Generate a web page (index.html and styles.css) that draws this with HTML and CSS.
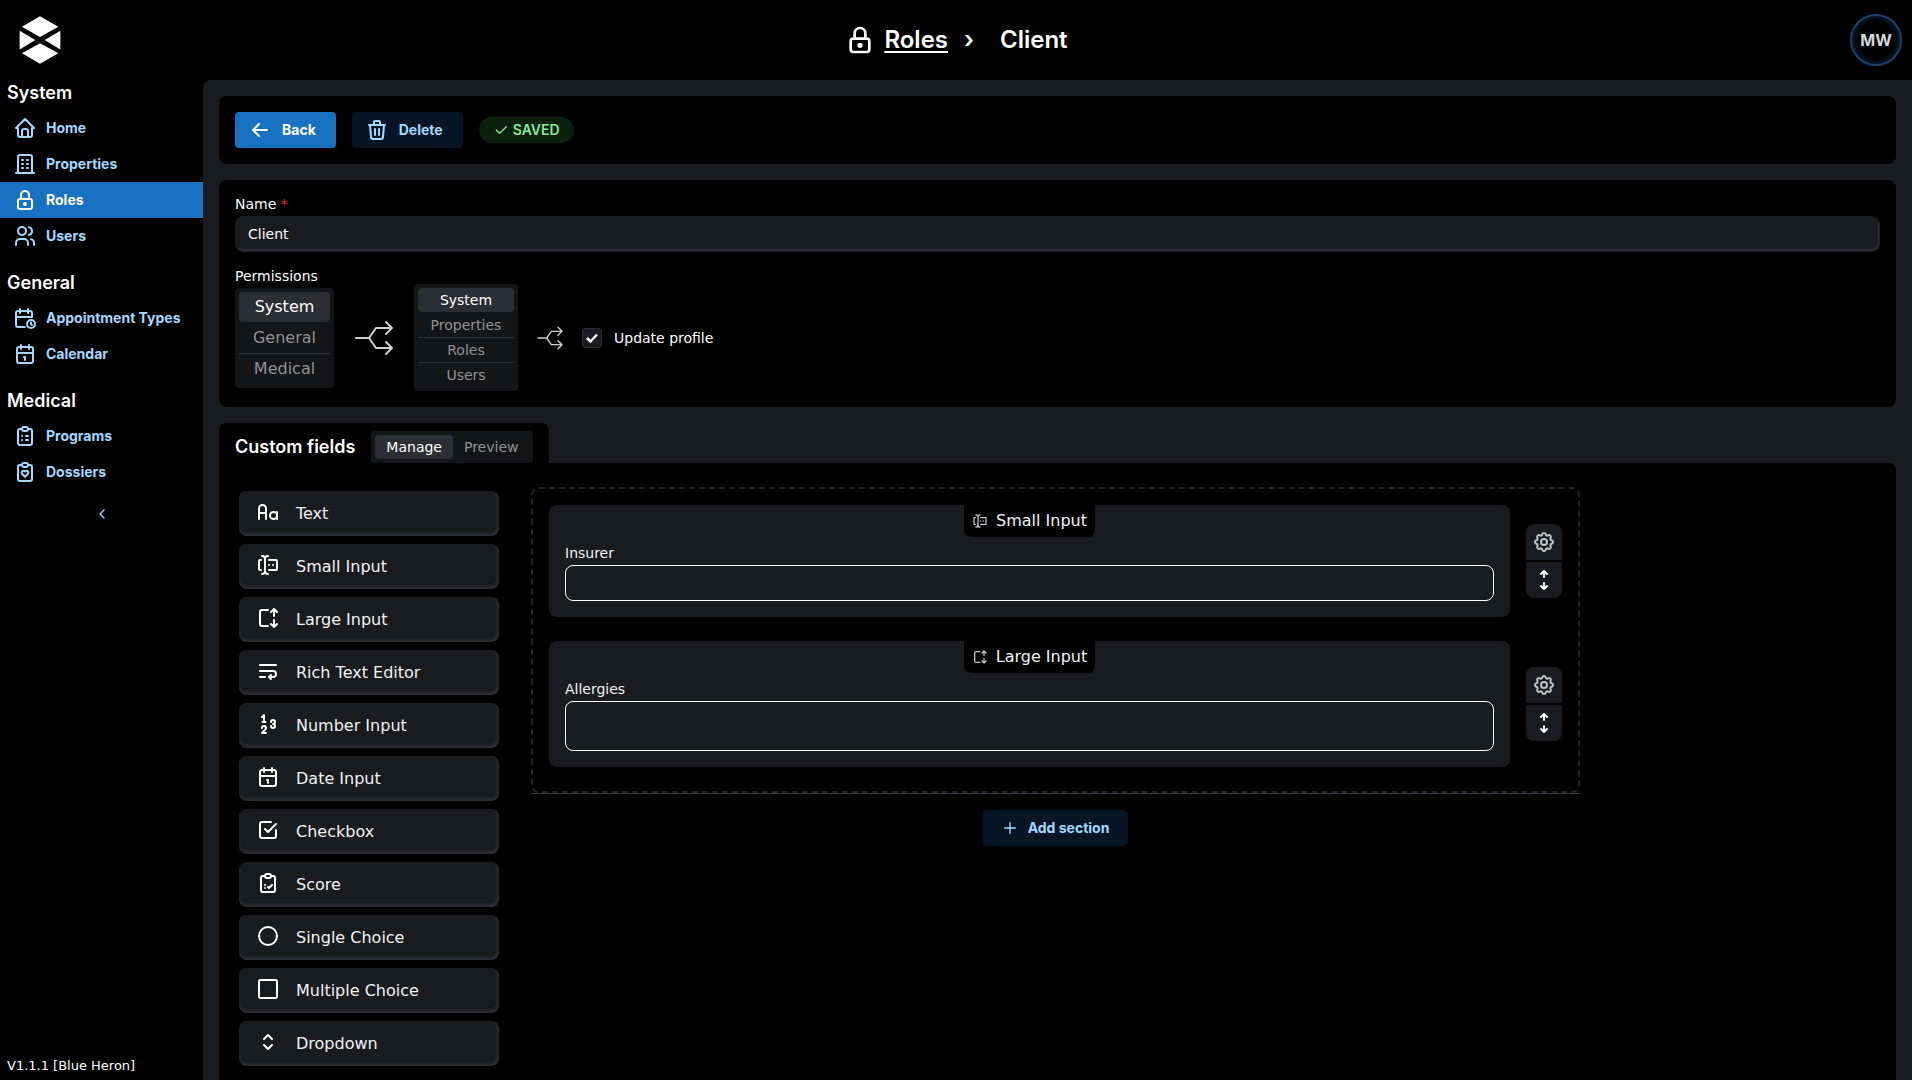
FILE: index.html
```html
<!DOCTYPE html>
<html lang="en">
<head>
<meta charset="utf-8">
<meta name="viewport" content="width=device-width, initial-scale=1">
<title>Roles › Client</title>
<link rel="stylesheet" href="styles.css">
</head>
<body>
<svg class="sprite" aria-hidden="true">
  <symbol id="i-home" viewBox="0 0 24 24"><path d="M5 12H3l9-9 9 9h-2M5 12v7a2 2 0 0 0 2 2h10a2 2 0 0 0 2-2v-7M9 21v-6a2 2 0 0 1 2-2h2a2 2 0 0 1 2 2v6"/></symbol>
  <symbol id="i-building" viewBox="0 0 24 24"><path d="M3 21h18M9 8h1M9 12h1M9 16h1M14 8h1M14 12h1M14 16h1M5 21V5a2 2 0 0 1 2-2h10a2 2 0 0 1 2 2v16"/></symbol>
  <symbol id="i-lock" viewBox="0 0 24 24"><path d="M5 13a2 2 0 0 1 2-2h10a2 2 0 0 1 2 2v6a2 2 0 0 1-2 2H7a2 2 0 0 1-2-2zM11 16a1 1 0 1 0 2 0a1 1 0 0 0-2 0M8 11V7a4 4 0 1 1 8 0v4"/></symbol>
  <symbol id="i-users" viewBox="0 0 24 24"><path d="M5 7a4 4 0 1 0 8 0a4 4 0 1 0-8 0M3 21v-2a4 4 0 0 1 4-4h4a4 4 0 0 1 4 4v2M16 3.13a4 4 0 0 1 0 7.75M21 21v-2a4 4 0 0 0-3-3.85"/></symbol>
  <symbol id="i-calendar-time" viewBox="0 0 24 24"><path d="M11.8 21H5a2 2 0 0 1-2-2V7a2 2 0 0 1 2-2h12a2 2 0 0 1 2 2v4M14 18a4 4 0 1 0 8 0a4 4 0 1 0-8 0M15 3v4M7 3v4M3 11h16M18 16.5V18l1 1"/></symbol>
  <symbol id="i-calendar" viewBox="0 0 24 24"><path d="M4 7a2 2 0 0 1 2-2h12a2 2 0 0 1 2 2v12a2 2 0 0 1-2 2H6a2 2 0 0 1-2-2zM16 3v4M8 3v4M4 11h16M11 15h1M12 15v3"/></symbol>
  <symbol id="i-clipboard" viewBox="0 0 24 24"><path d="M9 5H7a2 2 0 0 0-2 2v12a2 2 0 0 0 2 2h10a2 2 0 0 0 2-2V7a2 2 0 0 0-2-2h-2M9 5a2 2 0 0 1 2-2h2a2 2 0 0 1 2 2a2 2 0 0 1-2 2h-2a2 2 0 0 1-2-2z"/></symbol>
  <symbol id="i-clipboard-list" viewBox="0 0 24 24"><use href="#i-clipboard" width="24" height="24"/><path d="M9 12h.01M13 12h2M9 16h.01M13 16h2"/></symbol>
  <symbol id="i-clipboard-heart" viewBox="0 0 24 24"><use href="#i-clipboard" width="24" height="24"/><path d="M11.993 16.75l2.747-2.815a1.9 1.9 0 0 0 0-2.632a1.775 1.775 0 0 0-2.56 0l-.183.188l-.183-.189a1.775 1.775 0 0 0-2.56 0a1.899 1.899 0 0 0 0 2.632z"/></symbol>
  <symbol id="i-clipboard-check" viewBox="0 0 24 24"><use href="#i-clipboard" width="24" height="24"/><path d="M9 14h.01M9 17h.01M12 16l1 1l3-3"/></symbol>
  <symbol id="i-chevron-left" viewBox="0 0 24 24"><path d="M15 6l-6 6l6 6"/></symbol>
  <symbol id="i-arrow-left" viewBox="0 0 24 24"><path d="M5 12h14M5 12l6 6M5 12l6-6"/></symbol>
  <symbol id="i-trash" viewBox="0 0 24 24"><path d="M4 7h16M10 11v6M14 11v6M5 7l1 12a2 2 0 0 0 2 2h8a2 2 0 0 0 2-2l1-12M9 7V4a1 1 0 0 1 1-1h4a1 1 0 0 1 1 1v3"/></symbol>
  <symbol id="i-check" viewBox="0 0 24 24"><path d="M5 12l5 5L20 7"/></symbol>
  <symbol id="i-plus" viewBox="0 0 24 24"><path d="M12 4v16M4 12h16"/></symbol>
  <symbol id="i-split" viewBox="0 0 24 24"><path d="M21 17h-8l-3.5-5H3M21 7h-8l-3.5 5M18 10l3-3l-3-3M18 20l3-3l-3-3"/></symbol>
  <symbol id="i-letter-case" viewBox="0 0 24 24"><path d="M14 15.5a3.5 3.5 0 1 0 7 0a3.5 3.5 0 1 0-7 0M3 19V8.500a3.5 3.5 0 0 1 7 0V19M3 13h7M21 12v7"/></symbol>
  <symbol id="i-small-input" viewBox="0 0 24 24"><path d="M12 3a3 3 0 0 0-3 3v12a3 3 0 0 0 3 3M6 3a3 3 0 0 1 3 3v12a3 3 0 0 1-3 3M13 7h7a1 1 0 0 1 1 1v8a1 1 0 0 1-1 1h-7M5 7H4a1 1 0 0 0-1 1v8a1 1 0 0 0 1 1h1M17 12h.01M13 12h.01"/></symbol>
  <symbol id="i-large-input" viewBox="0 0 24 24"><path d="M12 20H6a2 2 0 0 1-2-2V6a2 2 0 0 1 2-2h6M18 14v7M18 3v7M15 18l3 3l3-3M15 6l3-3l3 3"/></symbol>
  <symbol id="i-text-wrap" viewBox="0 0 24 24"><path d="M4 6h16M4 18h5M4 12h13a3 3 0 0 1 0 6h-4l2-2m0 4l-2-2"/></symbol>
  <symbol id="i-numbers" viewBox="0 0 24 24"><path d="M8 10V3L6 5M6 16a2 2 0 1 1 4 0c0 .59-.6 1.460-1 2l-3 3h4M15 14a2 2 0 1 0 2-2a2 2 0 1 0-2-2M6.500 10h3"/></symbol>
  <symbol id="i-checkbox" viewBox="0 0 24 24"><path d="M9 11l3 3l8-8M20 12v6a2 2 0 0 1-2 2H6a2 2 0 0 1-2-2V6a2 2 0 0 1 2-2h9"/></symbol>
  <symbol id="i-circle" viewBox="0 0 24 24"><circle cx="12" cy="12" r="9"/></symbol>
  <symbol id="i-square" viewBox="0 0 24 24"><rect x="3" y="3" width="18" height="18" rx="1.500"/></symbol>
  <symbol id="i-selector" viewBox="0 0 24 24"><path d="M8 9l4-4l4 4M16 15l-4 4l-4-4"/></symbol>
  <symbol id="i-settings" viewBox="0 0 24 24"><path d="M10.325 4.317c.426-1.756 2.924-1.756 3.35 0a1.724 1.724 0 0 0 2.573 1.066c1.543-.94 3.31.826 2.37 2.37a1.724 1.724 0 0 0 1.065 2.572c1.756.426 1.756 2.924 0 3.35a1.724 1.724 0 0 0-1.066 2.573c.94 1.543-.826 3.31-2.37 2.37a1.724 1.724 0 0 0-2.572 1.065c-.426 1.756-2.924 1.756-3.35 0a1.724 1.724 0 0 0-2.573-1.066c-1.543.94-3.31-.826-2.37-2.37a1.724 1.724 0 0 0-1.065-2.572c-1.756-.426-1.756-2.924 0-3.35a1.724 1.724 0 0 0 1.066-2.573c-.94-1.543.826-3.31 2.37-2.37c1 .608 2.296.07 2.572-1.065z"/><circle cx="12" cy="12" r="3"/></symbol>
  <symbol id="i-move" viewBox="0 0 24 24"><path d="M9 18l3 3l3-3M12 15v6M15 6l-3-3l-3 3M12 3v6"/></symbol>
</svg>

<header class="topbar">
  <a class="logo" href="#" aria-label="Dashboard">
    <svg viewBox="0 0 126 146" aria-hidden="true"><path d="M63 1l56 32l-56 31L8 33zM1 45l48 28L1 102zM125 45v57L77 73zM63 83l56 30l-56 32L8 113z"/></svg>
  </a>
  <nav class="crumbs" aria-label="Breadcrumb">
    <svg class="icon icon-lg" aria-hidden="true"><use href="#i-lock"/></svg>
    <a href="#">Roles</a>
    <span class="crumb-sep">›</span>
    <span>Client</span>
  </nav>
  <button class="avatar" type="button">MW</button>
</header>

<div class="shell">
  <aside class="sidebar">
    <nav>
      <section class="nav-group">
        <h2>System</h2>
        <a href="#"><svg class="icon" aria-hidden="true"><use href="#i-home"/></svg>Home</a>
        <a href="#"><svg class="icon" aria-hidden="true"><use href="#i-building"/></svg>Properties</a>
        <a class="active" href="#" aria-current="page"><svg class="icon" aria-hidden="true"><use href="#i-lock"/></svg>Roles</a>
        <a href="#"><svg class="icon" aria-hidden="true"><use href="#i-users"/></svg>Users</a>
      </section>
      <section class="nav-group">
        <h2>General</h2>
        <a href="#"><svg class="icon" aria-hidden="true"><use href="#i-calendar-time"/></svg>Appointment Types</a>
        <a href="#"><svg class="icon" aria-hidden="true"><use href="#i-calendar"/></svg>Calendar</a>
      </section>
      <section class="nav-group">
        <h2>Medical</h2>
        <a href="#"><svg class="icon" aria-hidden="true"><use href="#i-clipboard-list"/></svg>Programs</a>
        <a href="#"><svg class="icon" aria-hidden="true"><use href="#i-clipboard-heart"/></svg>Dossiers</a>
      </section>
    </nav>
    <button class="collapse" type="button" aria-label="Collapse sidebar"><svg class="icon icon-sm" aria-hidden="true"><use href="#i-chevron-left"/></svg></button>
    <p class="version">V1.1.1 [Blue Heron]</p>
  </aside>

  <main class="content">
    <div class="panel toolbar">
      <button class="btn btn-primary" type="button"><svg class="icon" aria-hidden="true"><use href="#i-arrow-left"/></svg>Back</button>
      <button class="btn btn-light" type="button"><svg class="icon" aria-hidden="true"><use href="#i-trash"/></svg>Delete</button>
      <span class="status"><svg class="icon icon-sm" aria-hidden="true"><use href="#i-check"/></svg>SAVED</span>
    </div>

    <form class="panel role-form">
      <label class="field-label" for="name">Name <span class="required">*</span></label>
      <input class="text-input" id="name" type="text" value="Client" required>
      <span class="field-label permissions-label" id="permissions">Permissions</span>
      <div class="permissions" role="group" aria-labelledby="permissions">
        <div class="segmented segmented-stack segmented-md">
          <label><input type="radio" name="group" checked><span>System</span></label>
          <label><input type="radio" name="group"><span>General</span></label>
          <label><input type="radio" name="group"><span>Medical</span></label>
        </div>
        <svg class="icon icon-xl thin" aria-hidden="true"><use href="#i-split"/></svg>
        <div class="segmented segmented-stack segmented-sm">
          <label><input type="radio" name="area" checked><span>System</span></label>
          <label><input type="radio" name="area"><span>Properties</span></label>
          <label><input type="radio" name="area"><span>Roles</span></label>
          <label><input type="radio" name="area"><span>Users</span></label>
        </div>
        <svg class="icon icon-lg thin" aria-hidden="true"><use href="#i-split"/></svg>
        <label class="check"><input type="checkbox" checked>Update profile</label>
      </div>
    </form>

    <section class="custom-fields">
      <div class="tab">
        <h2>Custom fields</h2>
        <div class="segmented segmented-row">
          <label><input type="radio" name="mode" checked><span>Manage</span></label>
          <label><input type="radio" name="mode"><span>Preview</span></label>
        </div>
      </div>
      <div class="builder">
        <div class="palette">
          <button type="button"><svg class="icon" aria-hidden="true"><use href="#i-letter-case"/></svg>Text</button>
          <button type="button"><svg class="icon" aria-hidden="true"><use href="#i-small-input"/></svg>Small Input</button>
          <button type="button"><svg class="icon" aria-hidden="true"><use href="#i-large-input"/></svg>Large Input</button>
          <button type="button"><svg class="icon" aria-hidden="true"><use href="#i-text-wrap"/></svg>Rich Text Editor</button>
          <button type="button"><svg class="icon" aria-hidden="true"><use href="#i-numbers"/></svg>Number Input</button>
          <button type="button"><svg class="icon" aria-hidden="true"><use href="#i-calendar"/></svg>Date Input</button>
          <button type="button"><svg class="icon" aria-hidden="true"><use href="#i-checkbox"/></svg>Checkbox</button>
          <button type="button"><svg class="icon" aria-hidden="true"><use href="#i-clipboard-check"/></svg>Score</button>
          <button type="button"><svg class="icon" aria-hidden="true"><use href="#i-circle"/></svg>Single Choice</button>
          <button type="button"><svg class="icon" aria-hidden="true"><use href="#i-square"/></svg>Multiple Choice</button>
          <button type="button"><svg class="icon" aria-hidden="true"><use href="#i-selector"/></svg>Dropdown</button>
        </div>
        <div class="canvas">
          <div class="dropzone">
            <div class="field-row">
              <div class="field-card">
                <span class="field-type"><svg class="icon icon-sm" aria-hidden="true"><use href="#i-small-input"/></svg>Small Input</span>
                <label class="field-label" for="insurer">Insurer</label>
                <input class="outline-input" id="insurer" type="text">
              </div>
              <div class="field-tools">
                <button type="button" aria-label="Settings"><svg class="icon muted" aria-hidden="true"><use href="#i-settings"/></svg></button>
                <button type="button" aria-label="Move"><svg class="icon" aria-hidden="true"><use href="#i-move"/></svg></button>
              </div>
            </div>
            <div class="field-row">
              <div class="field-card">
                <span class="field-type"><svg class="icon icon-sm" aria-hidden="true"><use href="#i-large-input"/></svg>Large Input</span>
                <label class="field-label" for="allergies">Allergies</label>
                <textarea class="outline-input outline-area" id="allergies"></textarea>
              </div>
              <div class="field-tools">
                <button type="button" aria-label="Settings"><svg class="icon muted" aria-hidden="true"><use href="#i-settings"/></svg></button>
                <button type="button" aria-label="Move"><svg class="icon" aria-hidden="true"><use href="#i-move"/></svg></button>
              </div>
            </div>
          </div>
          <hr class="divider">
          <button class="btn btn-light btn-add" type="button"><svg class="icon icon-sm" aria-hidden="true"><use href="#i-plus"/></svg>Add section</button>
        </div>
      </div>
    </section>
  </main>
</div>
</body>
</html>
```
FILE: styles.css
```css
:root {
  --surface: #1a1b1e;
  --surface-dim: #141517;
  --edge: #2c2e33;
  --blue: #1971c2;
  --blue-dim: #051525;
  --blue-text: #a5d8ff;
  --text: #f1f3f5;
  --muted: #909296;
  --wide: "DejaVu Sans", sans-serif;
  --strong: Inter, sans-serif;
}

*, *::before, *::after { box-sizing: border-box; }

body {
  margin: 0;
  min-height: 100vh;
  display: flex;
  flex-direction: column;
  background: #000;
  color: #fff;
  font: 14px/16px var(--wide);
}

h2, p { margin: 0; }
button, input, textarea { font: inherit; color: inherit; }
button { border: 0; padding: 0; background: none; cursor: pointer; }

.sprite { display: none; }

.icon {
  width: 24px;
  height: 24px;
  flex: none;
  fill: none;
  stroke: currentColor;
  stroke-width: 2;
  stroke-linecap: round;
  stroke-linejoin: round;
}
.icon-sm { width: 16px; height: 16px; }
.icon-lg { width: 32px; height: 32px; }
.icon-xl { width: 48px; height: 48px; }
.thin { stroke-width: 1; color: #d0d0d0; }
.muted { color: #c1c2c5; }

/* Top bar */
.topbar {
  height: 80px;
  display: grid;
  grid-template-columns: 1fr auto 1fr;
  align-items: center;
  padding: 0 10px;
}
.logo { width: 42px; height: 48px; margin-left: 9px; }
.logo svg { display: block; width: 100%; height: 100%; fill: #fff; }
.crumbs {
  display: flex;
  align-items: center;
  font: 600 24px/32px var(--strong);
}
.crumbs a { margin-left: 8px; color: inherit; text-underline-offset: 3px; }
.crumb-sep { margin: 0 26px 0 16px; }
.avatar {
  justify-self: end;
  width: 52px;
  height: 52px;
  border: 2px solid #17406a;
  border-radius: 50%;
  box-shadow: inset 0 0 6px #12355a;
  color: #d5d6d8;
  font: 700 16px/16px var(--strong);
}

.shell { flex: 1; display: flex; }

/* Sidebar */
.sidebar {
  width: 203px;
  flex: none;
  display: flex;
  flex-direction: column;
}
.nav-group { margin-bottom: 16px; }
.nav-group h2 {
  margin-bottom: 4px;
  padding-left: 7px;
  font: 600 18px/26px var(--strong);
}
.nav-group a {
  height: 36px;
  display: flex;
  align-items: center;
  gap: 9px;
  padding-left: 13px;
  color: var(--blue-text);
  font: 700 14px/20px var(--strong);
  text-decoration: none;
  white-space: nowrap;
}
.nav-group a.active { background: var(--blue); color: #fff; }
.collapse { align-self: center; display: flex; color: var(--blue-text); }
.version { margin-top: auto; padding: 0 7px 6px; font-size: 13px; }

/* Content */
.content {
  flex: 1;
  min-width: 0;
  display: flex;
  flex-direction: column;
  gap: 16px;
  padding: 16px 16px 0;
  background: var(--surface);
  border-top-left-radius: 8px;
}
.panel { padding: 16px; background: #000; border-radius: 8px; }

.toolbar { display: flex; align-items: center; gap: 16px; }
.btn {
  height: 36px;
  display: inline-flex;
  align-items: center;
  gap: 10px;
  padding: 0 20px 0 13px;
  border-radius: 4px;
  font: 700 14px/20px var(--strong);
}
.btn-primary { background: var(--blue); color: #fff; }
.btn-light { background: var(--blue-dim); color: var(--blue-text); }
.status {
  height: 26px;
  display: inline-flex;
  align-items: center;
  gap: 4px;
  padding: 0 14px;
  border-radius: 13px;
  background: #08200c;
  color: #8ce99a;
  font: 600 14px/20px var(--strong);
}

.role-form { display: flex; flex-direction: column; }
.field-label { margin-bottom: 4px; line-height: 16px; }
.required { color: #e03131; }
.text-input {
  width: 100%;
  height: 36px;
  padding: 0 12px;
  border: 1px solid var(--surface);
  border-radius: 8px;
  background: var(--surface);
  box-shadow: inset -1px -2px 1px var(--edge);
}
.permissions-label { margin: 16px 0 0; }
.permissions { display: flex; align-items: center; gap: 16px; }

.segmented {
  padding: 4px;
  border-radius: 4px;
  background: var(--surface-dim);
  color: var(--muted);
  text-align: center;
}
.segmented label { display: block; cursor: pointer; }
.segmented input { position: absolute; opacity: 0; pointer-events: none; }
.segmented span { display: block; border-radius: 4px; }
.segmented input:checked + span {
  background: var(--edge);
  color: #fff;
}
.segmented-stack label + label { border-top: 1px solid var(--edge); }
.segmented-stack label:nth-child(2) { border-color: transparent; }
.segmented-md { min-width: 99px; font-size: 16px; }
.segmented-md span { line-height: 30px; }
.segmented-sm { min-width: 104px; }
.segmented-sm span { line-height: 24px; }
.segmented-row { display: flex; }
.segmented-row span { padding: 0 11px; line-height: 24px; }

.check { display: flex; align-items: center; gap: 12px; }
.check input {
  appearance: none;
  width: 20px;
  height: 20px;
  margin: 0;
  border-radius: 4px;
  background: var(--surface) url("data:image/svg+xml,%3Csvg xmlns='http://www.w3.org/2000/svg' viewBox='0 0 20 20' fill='none' stroke='white' stroke-width='2.500'%3E%3Cpath d='M5 10l3.500 3.500L15 6.500'/%3E%3C/svg%3E");
  box-shadow: inset 0 0 1px 1px var(--edge);
}

/* Custom fields */
.custom-fields { flex: 1; display: flex; flex-direction: column; }
.tab {
  align-self: flex-start;
  display: flex;
  align-items: center;
  gap: 16px;
  padding: 8px 16px 0;
  border-radius: 8px 8px 0 0;
  background: #000;
}
.tab h2 { font: 600 18px/24px var(--strong); }
.builder {
  flex: 1;
  display: grid;
  grid-template-columns: 268px minmax(0, 1fr) 272px;
  gap: 28px;
  align-items: start;
  padding: 24px 16px 8px;
  border-radius: 0 8px 0 0;
  background: #000;
}
.palette { display: grid; gap: 8px; padding: 4px; }
.palette button {
  height: 45px;
  display: flex;
  align-items: center;
  gap: 16px;
  padding: 0 17px;
  border-radius: 8px;
  background: var(--surface);
  box-shadow: inset -1px -2px 3px 1px var(--edge);
  color: var(--text);
  font-size: 16px;
}
.palette .icon { margin-bottom: 3px; color: #fff; }

.canvas { display: flex; flex-direction: column; align-items: center; }
.dropzone {
  align-self: stretch;
  display: grid;
  gap: 24px;
  padding: 16px 16px 24px;
  border: 2px dashed #222326;
  border-radius: 8px;
}
.divider {
  align-self: stretch;
  height: 1px;
  margin: 0 0 16px;
  border: 0;
  background: #373a40;
}
.field-row { display: flex; align-items: center; gap: 16px; }
.field-card {
  flex: 1;
  display: flex;
  flex-direction: column;
  padding: 0 16px 16px;
  border-radius: 8px;
  background: var(--surface);
  color: var(--text);
}
.field-type {
  align-self: center;
  height: 32px;
  display: flex;
  align-items: center;
  gap: 8px;
  margin-bottom: 8px;
  padding: 0 8px;
  border-radius: 0 0 8px 8px;
  background: #000;
  font-size: 16px;
}
.field-type .icon { color: #c1c2c5; }
.outline-input {
  width: 100%;
  height: 36px;
  padding: 0 12px;
  border: 1px solid #fff;
  border-radius: 8px;
  background: transparent;
}
.outline-area { display: block; height: 50px; padding: 8px 12px; resize: none; }
.field-tools { display: grid; gap: 2px; border-radius: 8px; overflow: hidden; }
.field-tools button {
  width: 36px;
  height: 36px;
  display: grid;
  place-items: center;
  background: var(--surface);
}
.btn-add { padding: 0 19px; }
```
